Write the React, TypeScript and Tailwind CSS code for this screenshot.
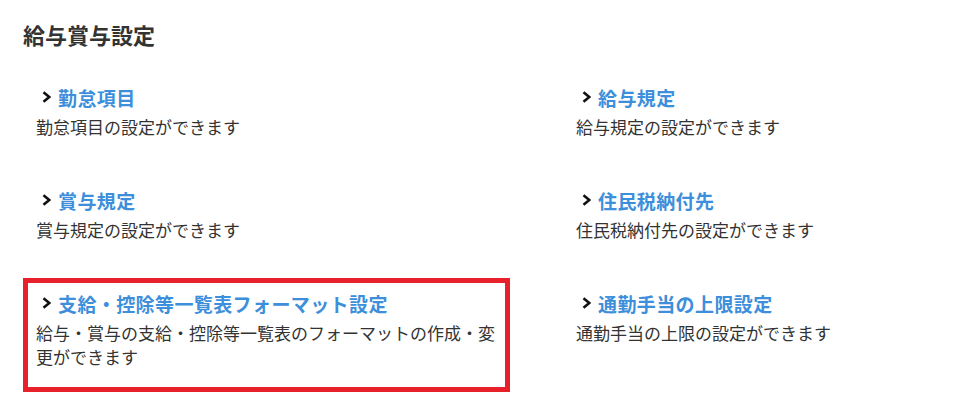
import React from "react";

const items = [
  { title: "勤怠項目", desc: "勤怠項目の設定ができます" },
  { title: "給与規定", desc: "給与規定の設定ができます" },
  { title: "賞与規定", desc: "賞与規定の設定ができます" },
  { title: "住民税納付先", desc: "住民税納付先の設定ができます" },
  {
    title: "支給・控除等一覧表フォーマット設定",
    desc: "給与・賞与の支給・控除等一覧表のフォーマットの作成・変更ができます",
    highlight: true,
  },
  { title: "通勤手当の上限設定", desc: "通勤手当の上限の設定ができます" },
];

function Chevron() {
  return (
    <svg width="9" height="12" viewBox="0 0 9 12" className="shrink-0 -mt-[3px]">
      <polyline points="1.5,1.2 7.3,6 1.5,10.8" fill="none" stroke="#111" strokeWidth="2.6" strokeLinecap="butt" strokeLinejoin="miter" />
    </svg>
  );
}

export default function App() {
  return (
    <div
      className="w-[964px] h-[411px] bg-white pl-[23px] pt-[18px] text-[#333]"
      style={{ fontFamily: '"Noto Sans CJK JP", "Noto Sans", sans-serif' }}
    >
      <h1 className="text-[22px] leading-[32px] font-bold text-[#333]">給与賞与設定</h1>
      <div className="mt-[22px] grid grid-cols-[487px_360px] gap-x-[53px] gap-y-[13px] items-start">
        {items.map((it) => (
          <div
            key={it.title}
            className={`border-[5px] px-[8px] pt-[7px] pb-[18px] ${it.highlight ? "border-[#e8202a]" : "border-transparent"}`}
          >
            <div className="flex items-center gap-[7px] pl-[6px] h-[28px]">
              <Chevron />
              <span className="text-[19px] leading-[28px] font-bold tracking-[0.4px] text-[#3d8fdb]">{it.title}</span>
            </div>
            <p className="mt-[3px] text-[17px] leading-[24px] text-[#333]">{it.desc}</p>
          </div>
        ))}
      </div>
    </div>
  );
}
